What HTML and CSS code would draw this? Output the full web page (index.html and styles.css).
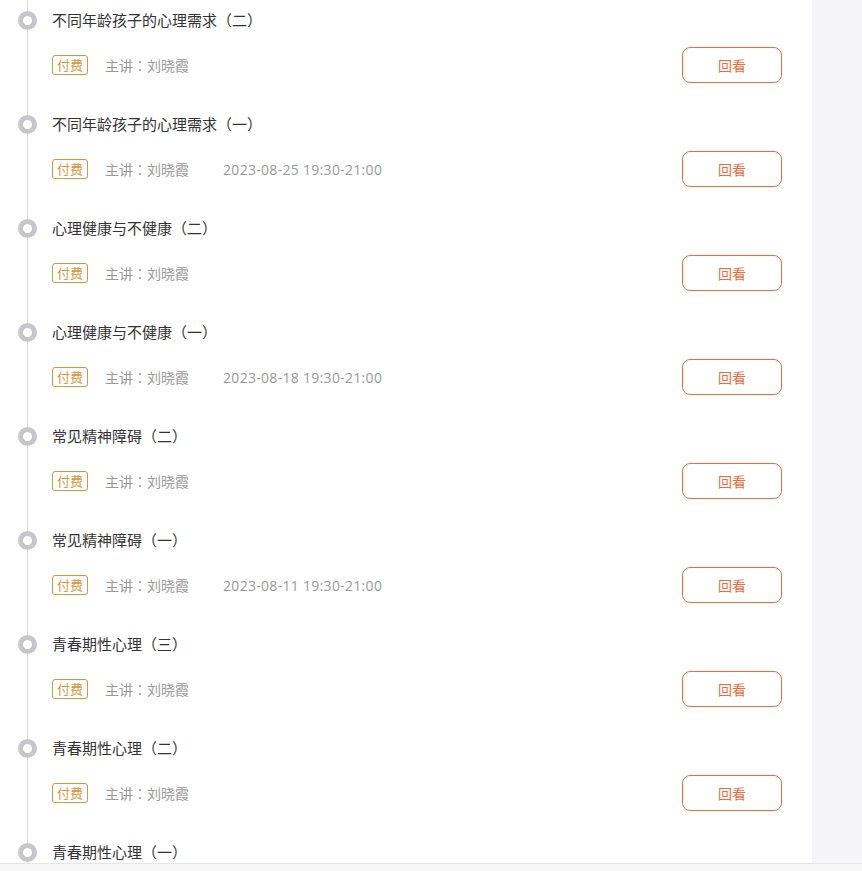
FILE: index.html
```html
<html>
    <head>
        <title>课程回看</title>
        <link rel="stylesheet" href="styles.css">
    </head>
    <body>
        <div class="page">
            <div class="panel">
                <ul class="timeline">
                    <li class="lesson">
                        <span class="dot"></span>
                        <div class="lesson-title">不同年龄孩子的心理需求（二）</div>
                        <div class="lesson-meta">
                            <span class="tag">付费</span>
                            <span class="teacher">主讲：刘晓霞</span>
                            <span class="time"></span>
                            <button class="replay">回看</button>
                        </div>
                    </li>
                    <li class="lesson">
                        <span class="dot"></span>
                        <div class="lesson-title">不同年龄孩子的心理需求（一）</div>
                        <div class="lesson-meta">
                            <span class="tag">付费</span>
                            <span class="teacher">主讲：刘晓霞</span>
                            <span class="time">2023-08-25 19:30-21:00</span>
                            <button class="replay">回看</button>
                        </div>
                    </li>
                    <li class="lesson">
                        <span class="dot"></span>
                        <div class="lesson-title">心理健康与不健康（二）</div>
                        <div class="lesson-meta">
                            <span class="tag">付费</span>
                            <span class="teacher">主讲：刘晓霞</span>
                            <span class="time"></span>
                            <button class="replay">回看</button>
                        </div>
                    </li>
                    <li class="lesson">
                        <span class="dot"></span>
                        <div class="lesson-title">心理健康与不健康（一）</div>
                        <div class="lesson-meta">
                            <span class="tag">付费</span>
                            <span class="teacher">主讲：刘晓霞</span>
                            <span class="time">2023-08-18 19:30-21:00</span>
                            <button class="replay">回看</button>
                        </div>
                    </li>
                    <li class="lesson">
                        <span class="dot"></span>
                        <div class="lesson-title">常见精神障碍（二）</div>
                        <div class="lesson-meta">
                            <span class="tag">付费</span>
                            <span class="teacher">主讲：刘晓霞</span>
                            <span class="time"></span>
                            <button class="replay">回看</button>
                        </div>
                    </li>
                    <li class="lesson">
                        <span class="dot"></span>
                        <div class="lesson-title">常见精神障碍（一）</div>
                        <div class="lesson-meta">
                            <span class="tag">付费</span>
                            <span class="teacher">主讲：刘晓霞</span>
                            <span class="time">2023-08-11 19:30-21:00</span>
                            <button class="replay">回看</button>
                        </div>
                    </li>
                    <li class="lesson">
                        <span class="dot"></span>
                        <div class="lesson-title">青春期性心理（三）</div>
                        <div class="lesson-meta">
                            <span class="tag">付费</span>
                            <span class="teacher">主讲：刘晓霞</span>
                            <span class="time"></span>
                            <button class="replay">回看</button>
                        </div>
                    </li>
                    <li class="lesson">
                        <span class="dot"></span>
                        <div class="lesson-title">青春期性心理（二）</div>
                        <div class="lesson-meta">
                            <span class="tag">付费</span>
                            <span class="teacher">主讲：刘晓霞</span>
                            <span class="time"></span>
                            <button class="replay">回看</button>
                        </div>
                    </li>
                    <li class="lesson">
                        <span class="dot"></span>
                        <div class="lesson-title">青春期性心理（一）</div>
                    </li>
                </ul>
            </div>
            <div class="side"></div>
        </div>
        <div class="footer-bar"></div>
    </body>
</html>
```

FILE: styles.css
```css
body {
    margin: 0;
    font-family: "Noto Sans CJK TC", "Noto Sans CJK SC", "Microsoft YaHei", sans-serif;
    background: #f4f4f9;
    height: 871px;
    overflow: hidden;
}
.page {
    display: flex;
    height: 863px;
    overflow: hidden;
}
.panel {
    width: 812px;
    background: #ffffff;
    flex-shrink: 0;
}
.side {
    flex: 1;
    background: #f4f4f9;
}
.timeline {
    list-style: none;
    margin: 0;
    padding: 0;
    position: relative;
}
.timeline::before {
    content: "";
    position: absolute;
    left: 27px;
    top: 0;
    bottom: -40px;
    width: 1px;
    background: #dcdce0;
}
.lesson {
    position: relative;
    height: 104px;
    box-sizing: border-box;
    padding: 10px 30px 0 52px;
}
.dot {
    position: absolute;
    left: 18px;
    top: 11px;
    width: 9px;
    height: 9px;
    border: 5px solid #c6c6ce;
    border-radius: 50%;
    background: #ffffff;
}
.lesson-title {
    font-size: 15px;
    line-height: 20px;
    color: #333333;
}
.lesson-meta {
    display: flex;
    align-items: center;
    margin-top: 17px;
    height: 36px;
}
.tag {
    font-size: 13px;
    line-height: 18px;
    padding: 0 4px;
    color: #d4963a;
    border: 1px solid #d4963a;
    border-radius: 3px;
}
.teacher {
    font-size: 14px;
    color: #999999;
    margin-left: 17px;
}
.time {
    font-family: "Open Sans", sans-serif;
    font-size: 14px;
    letter-spacing: 0.3px;
    color: #999999;
    margin-left: 34px;
}
.replay {
    margin-left: auto;
    width: 100px;
    height: 36px;
    background: #ffffff;
    border: 1px solid #f5683c;
    border-radius: 8px;
    color: #f5683c;
    font-size: 14px;
    font-family: inherit;
}
.footer-bar {
    height: 8px;
    background: #f7f7f7;
    border-top: 1px solid #e6e6e6;
    box-sizing: border-box;
}
```
